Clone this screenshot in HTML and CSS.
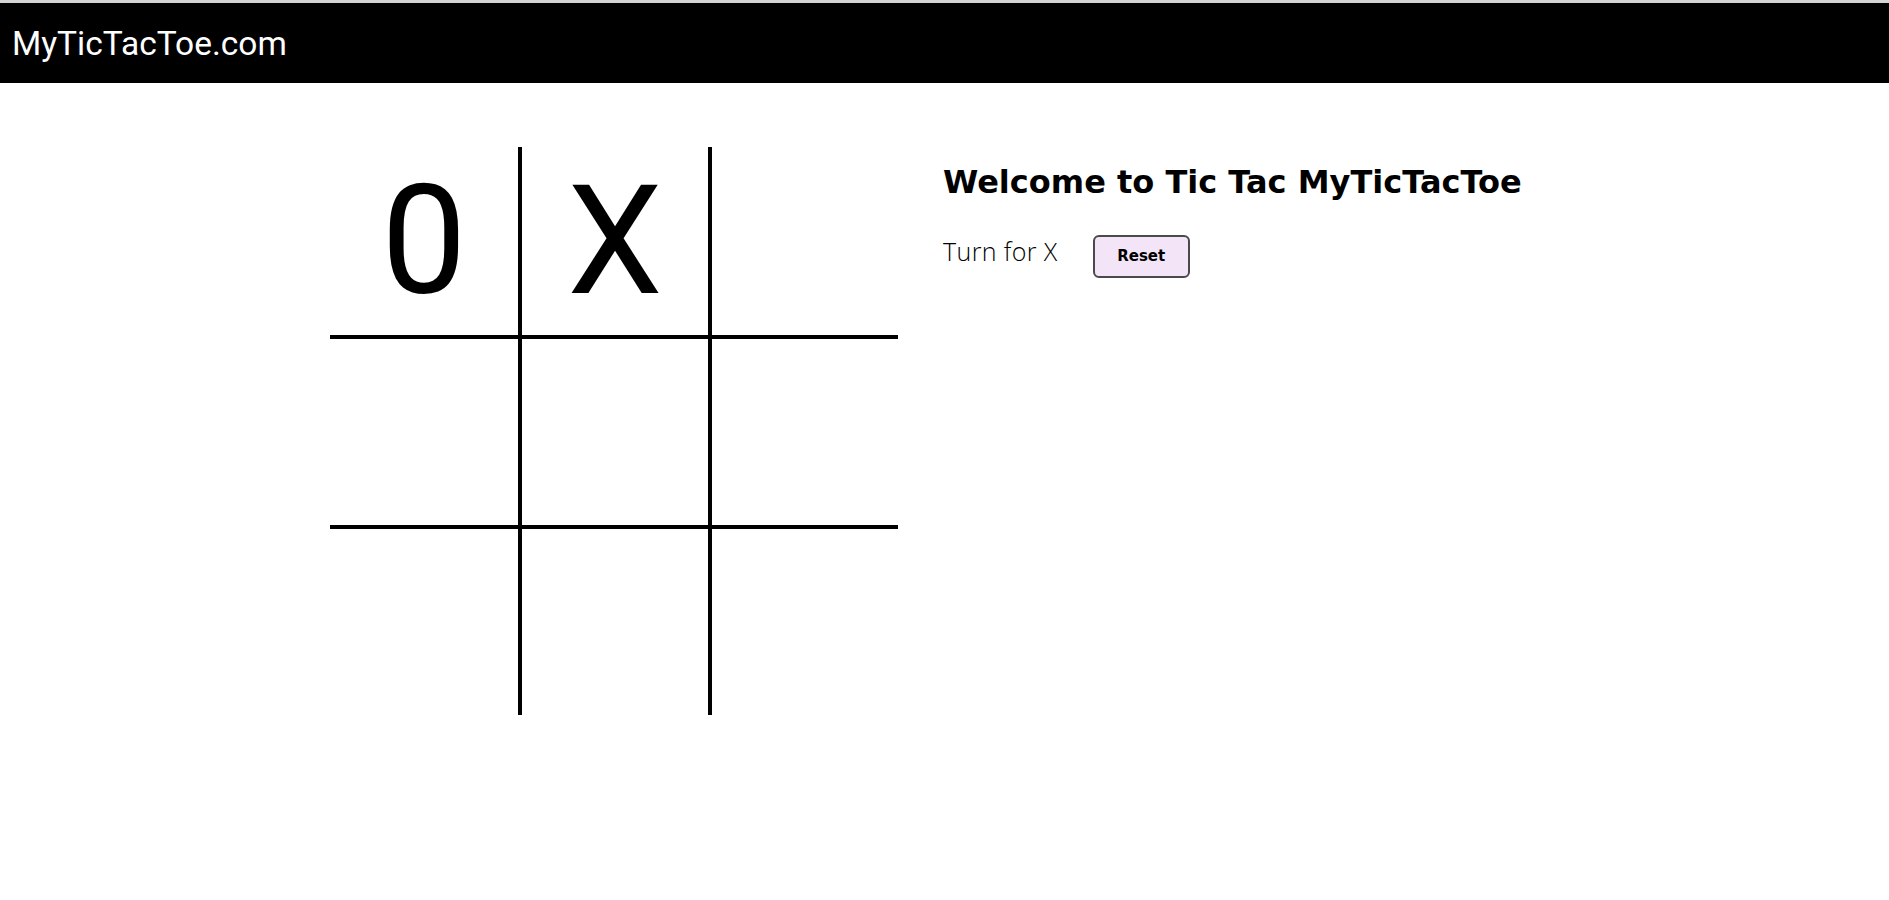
FILE: index.html
```html
<!DOCTYPE html>
<html lang="en">
<head>
<meta charset="utf-8">
<title>MyTicTacToe.com</title>
<link rel="stylesheet" href="styles.css">
</head>
<body>
<header class="topbar">
  <div class="brand">MyTicTacToe.com</div>
</header>
<main class="main">
  <div class="board">
    <div class="cell">0</div>
    <div class="cell col2">X</div>
    <div class="cell col3"></div>
    <div class="cell row2"></div>
    <div class="cell row2 col2"></div>
    <div class="cell row2 col3"></div>
    <div class="cell row3"></div>
    <div class="cell row3 col2"></div>
    <div class="cell row3 col3"></div>
  </div>
  <section class="panel">
    <h1 class="title">Welcome to Tic Tac MyTicTacToe</h1>
    <div class="status-row">
      <span class="turn">Turn for X</span>
      <button class="reset" type="button">Reset</button>
    </div>
  </section>
</main>
</body>
</html>
```

FILE: styles.css
```css
html, body {
  margin: 0;
  padding: 0;
  background: #ffffff;
}

body {
  border-top: 3px solid #d4d4d4;
  font-family: "DejaVu Sans", "Open Sans", sans-serif;
  color: #000;
}

.topbar {
  background: #000;
  height: 80px;
  display: flex;
  align-items: center;
  padding-left: 12px;
}

.brand {
  font-family: Roboto, "Liberation Sans", sans-serif;
  color: #fff;
  font-size: 33.5px;
  line-height: 40px;
  padding-top: 1px;
}

.main {
  display: flex;
  align-items: flex-start;
  padding: 64px 0 0 330px;
  gap: 45px;
}

.board {
  display: grid;
  grid-template-columns: 188px 190px 190px;
  grid-template-rows: 188px 190px 190px;
}

.cell {
  box-sizing: border-box;
  display: flex;
  align-items: center;
  justify-content: center;
  font-family: Roboto, "Liberation Sans", sans-serif;
  font-size: 152px;
  line-height: 1;
  color: #000;
}

.col2, .col3 {
  border-left: 4px solid #000;
}

.row2, .row3 {
  border-top: 4px solid #000;
}

.panel {
  padding-top: 17px;
}

.title {
  margin: 0;
  font-family: "DejaVu Sans", "Open Sans", sans-serif;
  font-weight: 700;
  font-size: 32px;
  line-height: 36px;
}

.status-row {
  display: flex;
  align-items: baseline;
  gap: 35px;
  margin-top: 34px;
}

.turn {
  font-family: "Open Sans", "DejaVu Sans", sans-serif;
  font-weight: 300;
  font-size: 25px;
  letter-spacing: 0.4px;
}

.reset {
  box-sizing: border-box;
  width: 97px;
  height: 43px;
  padding: 0;
  border: 2px solid #4a4a4a;
  border-radius: 6px;
  background: #f3e5f7;
  font-family: "DejaVu Sans", "Open Sans", sans-serif;
  font-weight: 700;
  font-size: 15px;
  color: #000;
  cursor: pointer;
}
```
